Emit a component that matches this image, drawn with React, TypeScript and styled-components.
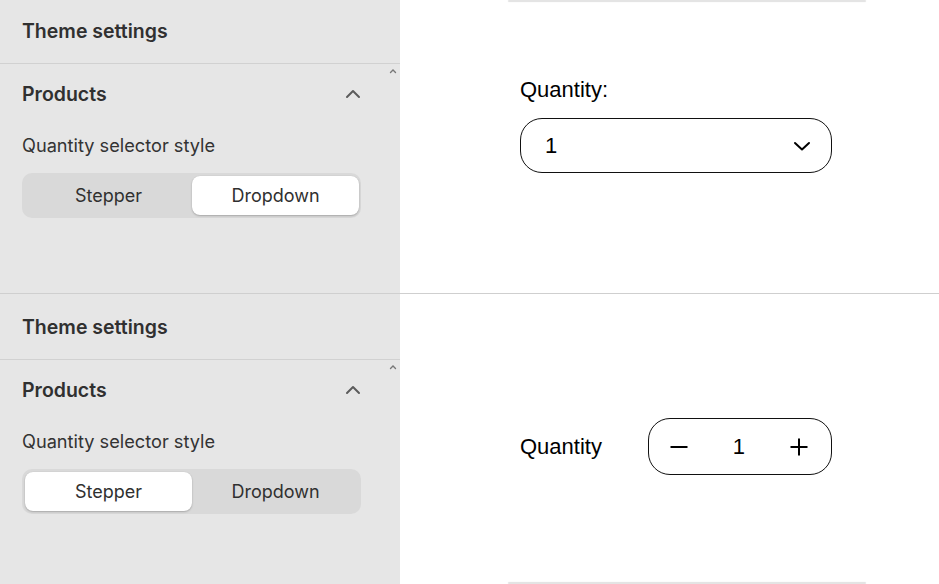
import React from "react";
import styled, { createGlobalStyle } from "styled-components";

const GlobalStyle = createGlobalStyle`
  * { box-sizing: border-box; }
  html, body { margin: 0; padding: 0; background: #ffffff; }
  body { font-family: Inter, "Noto Sans", sans-serif; }
`;

const Page = styled.div`
  width: 939px;
  height: 584px;
  display: flex;
  flex-direction: column;
  overflow: hidden;
`;

const Row = styled.div<{ $height: number; $divider?: boolean }>`
  display: flex;
  height: ${(p) => p.$height}px;
  border-bottom: ${(p) => (p.$divider ? "1px solid #cfcfcf" : "none")};
`;

const SidePanel = styled.div<{ $offset?: number }>`
  position: relative;
  width: 400px;
  flex-shrink: 0;
  padding-top: ${(p) => p.$offset ?? 0}px;
  background: #e6e6e6;
  color: #303030;
`;

const PanelHeader = styled.div`
  height: 64px;
  padding: 0 22px 1px;
  display: flex;
  align-items: center;
  border-bottom: 1px solid #d1d1d1;
  font-size: 19.5px;
  font-weight: 600;
`;

const Section = styled.div`
  padding: 0 39px 0 22px;
`;

const SectionHead = styled.div`
  height: 60px;
  display: flex;
  align-items: center;
  justify-content: space-between;
  font-size: 19.5px;
  font-weight: 600;
`;

const FieldLabel = styled.div`
  margin-top: 10px;
  font-size: 18.2px;
  line-height: 22px;
  color: #333333;
`;

const Segmented = styled.div`
  margin-top: 17px;
  height: 45px;
  padding: 3px 2px 3px 3px;
  border-radius: 10px;
  background: #d9d9d9;
  display: grid;
  grid-template-columns: 1fr 1fr;
`;

const Segment = styled.div<{ $active?: boolean }>`
  display: flex;
  align-items: center;
  justify-content: center;
  border-radius: 8px;
  font-size: 18px;
  color: #303030;
  background: ${(p) => (p.$active ? "#ffffff" : "transparent")};
  box-shadow: ${(p) =>
    p.$active ? "0 1px 2px rgba(0,0,0,0.22), 0 0 1px rgba(0,0,0,0.12)" : "none"};
`;

const ScrollCaret = styled.svg<{ $offset?: number }>`
  position: absolute;
  right: 3px;
  top: ${(p) => 68 + (p.$offset ?? 0)}px;
`;

const Preview = styled.div`
  flex: 1;
  display: flex;
  flex-direction: column;
  font-family: "Liberation Sans", Arial, sans-serif;
  color: #000000;
`;

const CardEdge = styled.div<{ $bottom?: boolean }>`
  margin-left: 108px;
  width: 358px;
  height: 2px;
  background: #e4e4e4;
  border-radius: 2px;
  box-shadow: 0 0 2px rgba(0, 0, 0, 0.06);
  margin-top: ${(p) => (p.$bottom ? "auto" : "0")};
`;

const DropdownBlock = styled.div`
  padding: 75px 0 0 120px;
`;

const QtyLabel = styled.div`
  font-size: 22px;
  line-height: 26px;
`;

const Select = styled.div`
  margin-top: 15px;
  width: 312px;
  height: 55px;
  border: 1px solid #111111;
  border-radius: 22px;
  display: flex;
  align-items: center;
  justify-content: space-between;
  padding: 0 20px 0 24px;
  font-size: 22px;
`;

const StepperBlock = styled.div`
  padding: 124px 0 0 120px;
  display: flex;
  align-items: center;
  gap: 46px;
`;

const Stepper = styled.div`
  width: 184px;
  height: 57px;
  border: 1px solid #111111;
  border-radius: 22px;
  display: grid;
  grid-template-columns: 1fr 1fr 1fr;
  align-items: center;
  justify-items: center;
  padding: 0 2px 0 0;
  font-size: 22px;
`;

const ChevronUp = () => (
  <svg width="16" height="10" viewBox="0 0 16 10" fill="none">
    <path d="M2 8 L8 2 L14 8" stroke="#5c5c5c" strokeWidth="2" strokeLinecap="round" strokeLinejoin="round" />
  </svg>
);

const Caret = ({ offset }: { offset?: number }) => (
  <ScrollCaret $offset={offset} width="8" height="6" viewBox="0 0 8 6" fill="none">
    <path d="M1.5 4.5 L4 2 L6.5 4.5" stroke="#777777" strokeWidth="1.4" strokeLinecap="round" />
  </ScrollCaret>
);

const ChevronDown = () => (
  <svg width="18" height="10" viewBox="0 0 18 10" fill="none">
    <path d="M2 2 L9 8.5 L16 2" stroke="#000000" strokeWidth="2" strokeLinecap="round" strokeLinejoin="round" />
  </svg>
);

const Minus = () => (
  <svg width="18" height="18" viewBox="0 0 18 18" fill="none">
    <path d="M0.5 9 H17.5" stroke="#000000" strokeWidth="2" />
  </svg>
);

const Plus = () => (
  <svg width="18" height="18" viewBox="0 0 18 18" fill="none">
    <path d="M0.5 9 H17.5 M9 0.5 V17.5" stroke="#000000" strokeWidth="2" />
  </svg>
);

type SettingsProps = { active: "stepper" | "dropdown"; offset?: number };

const Settings = ({ active, offset }: SettingsProps) => (
  <SidePanel $offset={offset}>
    <PanelHeader>Theme settings</PanelHeader>
    <Caret offset={offset} />
    <Section>
      <SectionHead>
        Products
        <ChevronUp />
      </SectionHead>
      <FieldLabel>Quantity selector style</FieldLabel>
      <Segmented>
        <Segment $active={active === "stepper"}>Stepper</Segment>
        <Segment $active={active === "dropdown"}>Dropdown</Segment>
      </Segmented>
    </Section>
  </SidePanel>
);

export default function App() {
  return (
    <>
      <GlobalStyle />
      <Page>
        <Row $height={294} $divider>
          <Settings active="dropdown" />
          <Preview>
            <CardEdge />
            <DropdownBlock>
              <QtyLabel>Quantity:</QtyLabel>
              <Select>
                <span>1</span>
                <ChevronDown />
              </Select>
            </DropdownBlock>
          </Preview>
        </Row>
        <Row $height={290}>
          <Settings active="stepper" offset={2} />
          <Preview>
            <StepperBlock>
              <QtyLabel>Quantity</QtyLabel>
              <Stepper>
                <Minus />
                <span>1</span>
                <Plus />
              </Stepper>
            </StepperBlock>
            <CardEdge $bottom />
          </Preview>
        </Row>
      </Page>
    </>
  );
}
